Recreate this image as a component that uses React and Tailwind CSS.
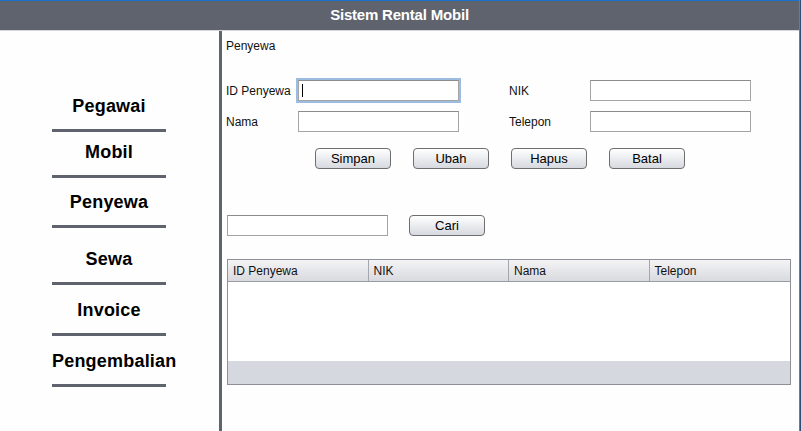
import React from 'react'

const menu = [
  { label: 'Pegawai', gap: 'mt-[65px]' },
  { label: 'Mobil', gap: 'mt-[10px]' },
  { label: 'Penyewa', gap: 'mt-[14px]' },
  { label: 'Sewa', gap: 'mt-[21px]' },
  { label: 'Invoice', gap: 'mt-[15px]' },
  { label: 'Pengembalian', gap: 'mt-[15px]' },
]

const columns = ['ID Penyewa', 'NIK', 'Nama', 'Telepon']

const TextField = ({ focused }) => (
  <div
    className={`w-[161px] h-[21px] bg-white border border-[#a5a5a5] border-t-[#8c8c8c] flex items-center ${
      focused ? 'ring-2 ring-[#9cbce2]' : ''
    }`}
  >
    {focused && <span className="ml-[3px] w-px h-[13px] bg-black" />}
  </div>
)

const Button = ({ children }) => (
  <button className="w-[76px] h-[21px] rounded-[4px] border border-[#6e6e6e] bg-gradient-to-b from-white to-[#d6d9df] text-[13px] leading-none text-black">
    {children}
  </button>
)

export default function App() {
  return (
    <div className="w-[801px] h-[431px] flex overflow-hidden bg-[#fefefe] font-['Liberation_Sans',Arial,sans-serif]">
      <div className="w-[799px] flex flex-col">
        {/* Title bar */}
        <div className="h-px bg-[#1c6fcb]" />
        <div className="h-[29px] bg-[#5f636d] flex items-center justify-center">
          <span className="text-white font-bold text-[15px] tracking-[-0.2px]">Sistem Rental Mobil</span>
        </div>
        <div className="h-px bg-[#d3d6dd]" />

        <div className="flex flex-1">
          {/* Sidebar menu */}
          <div className="w-[219px] flex flex-col">
            {menu.map(item => (
              <div key={item.label} className={`ml-[52px] w-[114px] ${item.gap}`}>
                <div className="text-center text-[18px] leading-[21px] font-bold text-black whitespace-nowrap tracking-[0.2px]">
                  {item.label}
                </div>
                <div className="mt-[12px] h-[3px] bg-[#5f636d]" />
              </div>
            ))}
          </div>
          <div className="w-[3px] bg-[#5f636d]" />

          {/* Form */}
          <div className="flex-1 flex flex-col text-[12px] leading-[14px] text-[#111]">
            <div className="mt-[8px] pl-[4px]">Penyewa</div>

            <div className="mt-[27px] pl-[4px] flex items-center">
              <span className="w-[72px] pt-px">ID Penyewa</span>
              <TextField focused />
              <span className="ml-[50px] w-[81px] pt-px">NIK</span>
              <TextField />
            </div>
            <div className="mt-[10px] pl-[4px] flex items-center">
              <span className="w-[72px] pt-px">Nama</span>
              <TextField />
              <span className="ml-[50px] w-[81px] pt-px">Telepon</span>
              <TextField />
            </div>

            <div className="mt-[16px] pl-[93px] flex gap-[22px]">
              <Button>Simpan</Button>
              <Button>Ubah</Button>
              <Button>Hapus</Button>
              <Button>Batal</Button>
            </div>

            <div className="mt-[46px] pl-[5px] flex items-center gap-[21px]">
              <TextField />
              <Button>Cari</Button>
            </div>

            {/* Table */}
            <div className="mt-[23px] ml-[5px] w-[564px] h-[126px] border border-[#8e9098] flex flex-col">
              <div className="h-[22px] grid grid-cols-4 bg-gradient-to-b from-[#f4f4f6] to-[#d9dadf] border-b border-[#9a9ca3]">
                {columns.map((col, i) => (
                  <div
                    key={col}
                    className={`pl-[5px] flex items-center ${i < 3 ? 'border-r border-[#a4a6ad]' : ''}`}
                  >
                    {col}
                  </div>
                ))}
              </div>
              <div className="h-[79px] bg-white" />
              <div className="flex-1 bg-[#d5d8df]" />
            </div>
          </div>
        </div>
      </div>
      <div className="w-px bg-[#3d86d0]" />
      <div className="w-px bg-[#2a4f78]" />
    </div>
  )
}
